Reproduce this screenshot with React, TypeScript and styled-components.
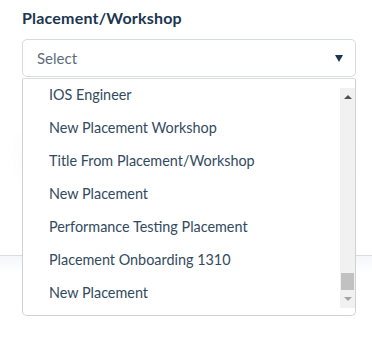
import styled, { createGlobalStyle } from 'styled-components'

const GlobalStyle = createGlobalStyle`
  html, body {
    margin: 0;
    padding: 0;
    background: #ffffff;
  }
  body {
    font-family: Lato, "Noto Sans", sans-serif;
    -webkit-font-smoothing: antialiased;
  }
`

const Page = styled.main`
  position: relative;
  width: 372px;
  height: 338px;
  overflow: hidden;
  display: flex;
  flex-direction: column;
`

const Field = styled.section`
  position: relative;
  padding: 9px 16px 0 22px;
  display: flex;
  flex-direction: column;
`

const Label = styled.label`
  font-size: 16px;
  font-weight: 700;
  line-height: 18px;
  color: #1b3650;
  letter-spacing: 0.2px;
  margin-bottom: 12px;
`

const SelectBox = styled.div`
  height: 36px;
  border: 1px solid #d5dae3;
  border-radius: 5px;
  display: flex;
  align-items: center;
  justify-content: space-between;
  padding: 0 12px 0 14px;
  font-size: 15px;
  color: #5d6c7b;
`

const Caret = styled.span`
  width: 0;
  height: 0;
  border-left: 4px solid transparent;
  border-right: 4px solid transparent;
  border-top: 7px solid #1b3650;
`

const Ghost = styled.div`
  margin: 58px 22px 0;
  height: 44px;
  border-radius: 8px;
  box-shadow: 0 0 14px rgba(90, 110, 170, 0.05);
`

const Footer = styled.footer`
  margin-top: 76px;
  flex: 1;
  border-top: 1px solid #d9dce7;
  background: linear-gradient(#f4f6fa, #ffffff 18px);
`

const Dropdown = styled.div`
  position: absolute;
  top: 78px;
  left: 22px;
  width: 332px;
  height: 236px;
  border: 1px solid #d2d2d4;
  border-top-color: #dcdcdc;
  border-radius: 2px 2px 5px 5px;
  background: #ffffff;
  display: flex;
`

const Options = styled.ul`
  flex: 1;
  list-style: none;
  margin: 0;
  padding: 0;
`

const Option = styled.li`
  height: 33px;
  line-height: 32px;
  padding-left: 26px;
  font-size: 14.4px;
  color: #324a60;
  white-space: nowrap;
`

const Scrollbar = styled.div`
  width: 15px;
  margin: 9px 0 7px;
  background: #f1f1f1;
  display: flex;
  flex-direction: column;
  align-items: center;
  justify-content: space-between;
`

const Arrow = styled.span<{ $down?: boolean; $dim?: boolean }>`
  margin: 7px 0;
  width: 0;
  height: 0;
  border-left: 4px solid transparent;
  border-right: 4px solid transparent;
  ${(p) =>
    p.$down
      ? `border-top: 4px solid ${p.$dim ? '#a3a3a3' : '#505050'};`
      : `border-bottom: 4px solid ${p.$dim ? '#a3a3a3' : '#505050'};`}
`

const Track = styled.div`
  flex: 1;
  width: 100%;
  display: flex;
  flex-direction: column;
  justify-content: flex-end;
  align-items: center;
`

const Thumb = styled.div`
  width: 13px;
  height: 17px;
  background: #c1c1c1;
`

const options = [
  'IOS Engineer',
  'New Placement Workshop',
  'Title From Placement/Workshop',
  'New Placement',
  'Performance Testing Placement',
  'Placement Onboarding 1310',
  'New Placement',
]

const App = () => {
  return (
    <>
      <GlobalStyle />
      <Page>
        <Field>
          <Label>Placement/Workshop</Label>
          <SelectBox>
            <span>Select</span>
            <Caret />
          </SelectBox>
        </Field>
        <Ghost />
        <Footer />
        <Dropdown>
          <Options>
            {options.map((o, i) => (
              <Option key={`${o}-${i}`}>{o}</Option>
            ))}
          </Options>
          <Scrollbar>
            <Arrow />
            <Track>
              <Thumb />
            </Track>
            <Arrow $down $dim />
          </Scrollbar>
        </Dropdown>
      </Page>
    </>
  )
}

export default App
